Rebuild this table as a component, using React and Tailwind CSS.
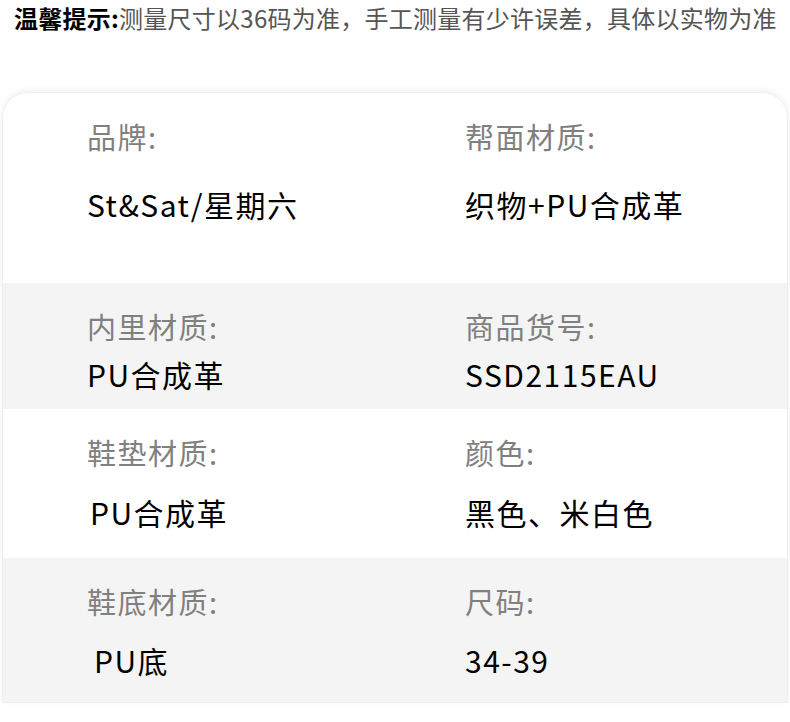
export default function App() {
  const font = { fontFamily: '"Noto Sans CJK SC", "Noto Sans", sans-serif' };
  const rows = [
    { h: "h-[190px]", bg: "bg-white", l1: "品牌:", v1: "St&Sat/星期六", l2: "帮面材质:", v2: "织物+PU合成革", lt: "pt-[25px]", gap: "mt-[31px]", ind: "" },
    { h: "h-[126px]", bg: "bg-[#f4f4f4]", l1: "内里材质:", v1: "PU合成革", l2: "商品货号:", v2: "SSD2115EAU", lt: "pt-[25px]", gap: "mt-[11px]", ind: "" },
    { h: "h-[149px]", bg: "bg-white", l1: "鞋垫材质:", v1: "PU合成革", l2: "颜色:", v2: "黑色、米白色", lt: "pt-[25px]", gap: "mt-[23px]", ind: "ml-[3px]" },
    { h: "h-[144px]", bg: "bg-[#f4f4f4]", l1: "鞋底材质:", v1: "PU底", l2: "尺码:", v2: "34-39", lt: "pt-[25px]", gap: "mt-[22px]", ind: "ml-[7px]" },
  ];
  return (
    <div className="w-[790px] h-[722px] bg-white overflow-hidden" style={font}>
      <div className="h-[92px] pl-[14px] pt-[2px] text-[24px] leading-[32px] tracking-[0.25px] whitespace-nowrap">
        <span className="font-bold text-black">温馨提示:</span>
        <span className="text-[#555]">测量尺寸以36码为准，手工测量有少许误差，具体以实物为准</span>
      </div>
      <div className="mx-[2px] rounded-t-[26px] shadow-[0_-2px_6px_rgba(0,0,0,0.06)] border border-[#eeeeee] overflow-hidden">
        {rows.map((r, i) => (
          <div key={i} className={`${r.h} ${r.bg} ${r.lt} grid grid-cols-[463px_1fr] pl-[84px]`}>
            <div>
              <div className="text-[29px] leading-[36px] tracking-[1.5px] text-[#808080]">{r.l1}</div>
              <div className={`${r.gap} ${r.ind} text-[30px] leading-[38px] tracking-[1.5px] text-black`}>{r.v1}</div>
            </div>
            <div className="-ml-[85px]">
              <div className="text-[29px] leading-[36px] tracking-[1.5px] text-[#808080]">{r.l2}</div>
              <div className={`${r.gap} text-[30px] leading-[38px] tracking-[1.5px] text-black`}>{r.v2}</div>
            </div>
          </div>
        ))}
      </div>
    </div>
  );
}
